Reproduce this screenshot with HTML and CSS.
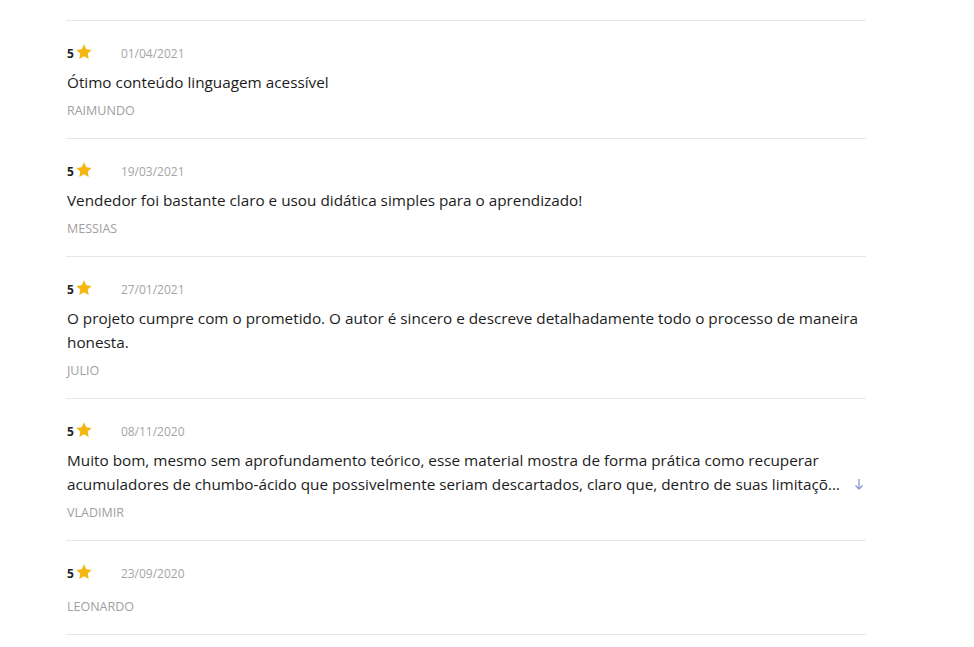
FILE: index.html
```html
<!DOCTYPE html>
<html lang="pt-BR">
<head>
  <meta charset="UTF-8" />
  <title>Avaliações</title>
  <link rel="stylesheet" href="styles.css">
</head>
<body>

  <div class="reviews">

    <div class="review">
      <div class="review-head">
        <span class="score">5</span>
        <svg class="star" viewBox="0 0 24 24"><path d="M12 1.8l3.1 6.5 7.1.9-5.2 4.9 1.3 7.1L12 17.8l-6.3 3.4 1.3-7.1-5.2-4.9 7.1-.9z"/></svg>
        <span class="date">01/04/2021</span>
      </div>
      <div class="review-body">
        <p class="review-text">Ótimo conteúdo linguagem acessível</p>
      </div>
      <div class="author">RAIMUNDO</div>
    </div>

    <div class="review">
      <div class="review-head">
        <span class="score">5</span>
        <svg class="star" viewBox="0 0 24 24"><path d="M12 1.8l3.1 6.5 7.1.9-5.2 4.9 1.3 7.1L12 17.8l-6.3 3.4 1.3-7.1-5.2-4.9 7.1-.9z"/></svg>
        <span class="date">19/03/2021</span>
      </div>
      <div class="review-body">
        <p class="review-text">Vendedor foi bastante claro e usou didática simples para o aprendizado!</p>
      </div>
      <div class="author">MESSIAS</div>
    </div>

    <div class="review">
      <div class="review-head">
        <span class="score">5</span>
        <svg class="star" viewBox="0 0 24 24"><path d="M12 1.8l3.1 6.5 7.1.9-5.2 4.9 1.3 7.1L12 17.8l-6.3 3.4 1.3-7.1-5.2-4.9 7.1-.9z"/></svg>
        <span class="date">27/01/2021</span>
      </div>
      <div class="review-body">
        <p class="review-text">O projeto cumpre com o prometido. O autor é sincero e descreve detalhadamente todo o processo de maneira honesta.</p>
      </div>
      <div class="author">JULIO</div>
    </div>

    <div class="review">
      <div class="review-head">
        <span class="score">5</span>
        <svg class="star" viewBox="0 0 24 24"><path d="M12 1.8l3.1 6.5 7.1.9-5.2 4.9 1.3 7.1L12 17.8l-6.3 3.4 1.3-7.1-5.2-4.9 7.1-.9z"/></svg>
        <span class="date">08/11/2020</span>
      </div>
      <div class="review-body">
        <p class="review-text">Muito bom, mesmo sem aprofundamento teórico, esse material mostra de forma prática como recuperar<br><span class="cut">acumuladores de chumbo-ácido que possivelmente seriam descartados, claro que, dentro de suas limitações, mas com resultados bem satisfatórios.</span></p>
        <svg class="more" viewBox="0 0 10 12"><path d="M5 1v10M1.5 7.5L5 11l3.5-3.5"/></svg>
      </div>
      <div class="author">VLADIMIR</div>
    </div>

    <div class="review">
      <div class="review-head">
        <span class="score">5</span>
        <svg class="star" viewBox="0 0 24 24"><path d="M12 1.8l3.1 6.5 7.1.9-5.2 4.9 1.3 7.1L12 17.8l-6.3 3.4 1.3-7.1-5.2-4.9 7.1-.9z"/></svg>
        <span class="date">23/09/2020</span>
      </div>
      <div class="review-body">
        <p class="review-text"></p>
      </div>
      <div class="author">LEONARDO</div>
    </div>

  </div>

</body>
</html>
```

FILE: styles.css
```css
body {
  margin: 0;
  background: #fff;
  font-family: "Open Sans", "Noto Sans", sans-serif;
  color: #1c1c1c;
}

.reviews {
  width: 800px;
  margin: 20px 0 0 66px;
  border-top: 1px solid #e6e6e6;
}

.review {
  padding: 22px 0 18px 1px;
  border-bottom: 1px solid #e6e6e6;
}

.review-head {
  display: flex;
  align-items: center;
  height: 20px;
}

.score {
  font-size: 12px;
  font-weight: 700;
  color: #222;
}

.star {
  width: 18px;
  height: 18px;
  fill: #f4b70f;
  margin-left: 1px;
  margin-bottom: 2px;
}

.date {
  font-size: 12px;
  color: #a5a5a5;
  margin-left: 28px;
}

.review-body {
  display: flex;
  align-items: flex-end;
  margin: 7px 0 8px;
}

.review-text {
  flex: 1;
  min-width: 0;
  margin: 0;
  font-size: 15.3px;
  line-height: 24px;
}

.cut {
  display: inline-block;
  max-width: 100%;
  white-space: nowrap;
  overflow: hidden;
  text-overflow: ellipsis;
  vertical-align: top;
}

.more {
  width: 10px;
  height: 12px;
  fill: none;
  stroke: #8a9ad6;
  stroke-width: 1.3;
  margin: 0 2px 6px 9px;
}

.author {
  font-size: 12.5px;
  line-height: 18px;
  color: #a0a0a0;
}
```
